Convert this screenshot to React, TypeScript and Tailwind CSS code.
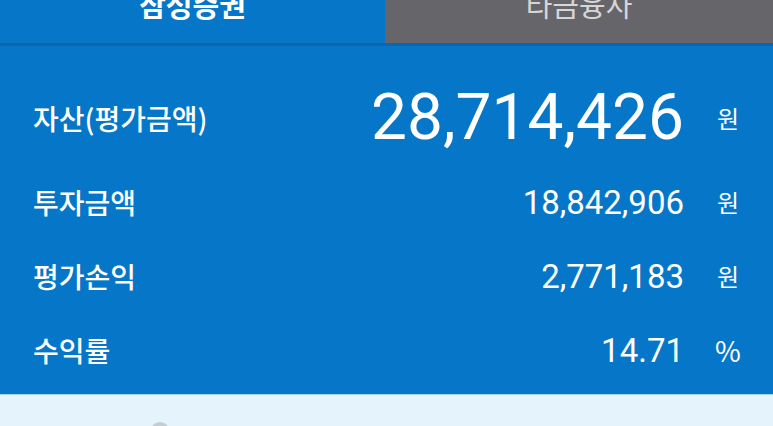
const rows = [
  { label: '투자금액', value: '18,842,906', unit: '원' },
  { label: '평가손익', value: '2,771,183', unit: '원' },
  { label: '수익률', value: '14.71', unit: '%' },
]

const kr = "font-['Noto_Sans_CJK_KR',sans-serif]"
const num = "font-['Roboto','Noto_Sans_CJK_KR',sans-serif]"

export default function App() {
  return (
    <div className="flex h-[426px] w-[773px] flex-col overflow-hidden bg-[#e5f3fd]">
      {/* Tabs */}
      <div className="flex h-[43px] shrink-0">
        <div className="flex flex-1 justify-center bg-[#0677c8]">
          <span className={`${kr} -mt-[16px] text-[29px] font-bold leading-[40px] text-white`}>삼성증권</span>
        </div>
        <div className="flex w-[388px] justify-center bg-[#66656a]">
          <span className={`${kr} -mt-[16px] text-[29px] leading-[40px] text-[#d6d6d8]`}>타금융사</span>
        </div>
      </div>
      <div className="h-[3px] shrink-0 bg-[#0a67ae]" />

      {/* Summary panel */}
      <div className="flex shrink-0 flex-col bg-[#0677c8] pt-[35px] pb-[7px]">
        <div className="flex h-[74px] items-center pl-[33px] pr-[16px] text-white">
          <span className={`${kr} text-[28px] font-medium`}>자산(평가금액)</span>
          <span className={`${num} flex-1 text-right text-[64px] leading-none`}>28,714,426</span>
          <span className={`${kr} ml-[15px] w-[58px] text-center text-[24px]`}>원</span>
        </div>
        <div className="h-[10px]" />
        {rows.map((r) => (
          <div key={r.label} className="flex h-[74px] items-center pl-[33px] pr-[16px] text-white">
            <span className={`${kr} text-[28px] font-medium`}>{r.label}</span>
            <span className={`${num} flex-1 text-right text-[33px] leading-none`}>{r.value}</span>
            <span className={`${kr} ml-[15px] w-[58px] text-center ${r.unit === '%' ? 'text-[28px]' : 'text-[24px]'}`}>{r.unit}</span>
          </div>
        ))}
      </div>

      {/* Lower list (cut off) */}
      <div className="flex-1 border-t border-[#a6d6f4] pl-[150px] pt-[27px]">
        <div className="h-[20px] w-[20px] rounded-full bg-[#c5ccd4]" />
      </div>
    </div>
  )
}
